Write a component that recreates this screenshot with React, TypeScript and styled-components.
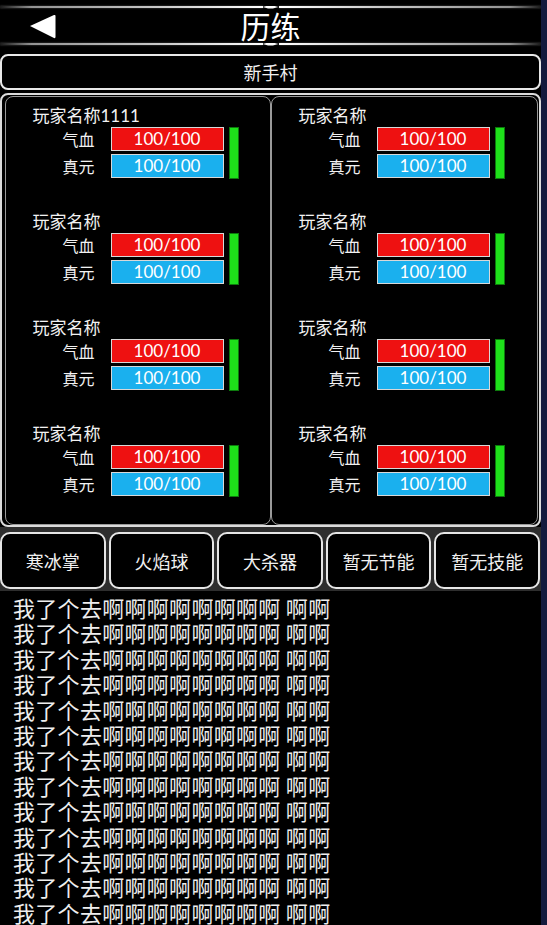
import styled, { createGlobalStyle } from "styled-components";

const GlobalStyle = createGlobalStyle`
  html, body {
    margin: 0;
    padding: 0;
    background: #141a3d;
  }
  body {
    font-family: Lato, "Noto Sans CJK SC", sans-serif;
    color: #f2f2f2;
  }
  * {
    box-sizing: border-box;
  }
`;

interface Player {
  name: string;
  hp: string;
  mp: string;
}

const players: Player[] = Array.from({ length: 8 }, (_, i) => ({
  name: i === 0 ? "玩家名称1111" : "玩家名称",
  hp: "100/100",
  mp: "100/100",
}));

const skills = ["寒冰掌", "火焰球", "大杀器", "暂无节能", "暂无技能"];

const logLines = Array.from({ length: 13 }, () => "我了个去啊啊啊啊啊啊啊啊 啊啊");

const BackArrow = () => (
  <svg width="26" height="25" viewBox="0 0 26 25">
    <path d="M0 12 L24 1 Q25.5 0.5 25.5 2 L25.5 23 Q25.5 24.5 24 24 Z" fill="#fff" />
  </svg>
);

const PlayerCard: React.FC<{ player: Player }> = ({ player }) => (
  <Card>
    <Name>{player.name}</Name>
    <Stats>
      <StatRows>
        <StatRow>
          <StatLabel>气血</StatLabel>
          <Bar $color="#ee1111">{player.hp}</Bar>
        </StatRow>
        <StatRow>
          <StatLabel>真元</StatLabel>
          <Bar $color="#1ab0ee">{player.mp}</Bar>
        </StatRow>
      </StatRows>
      <Energy />
    </Stats>
  </Card>
);

const App = () => {
  const left = players.filter((_, i) => i % 2 === 0);
  const right = players.filter((_, i) => i % 2 === 1);

  return (
    <>
      <GlobalStyle />
      <Screen>
        <Header>
          <Rule>
            <RuleLine $side="left" />
            <Gem />
            <RuleLine $side="right" />
          </Rule>
          <TitleRow>
            <BackButton>
              <BackArrow />
            </BackButton>
            <Title>历练</Title>
            <span />
          </TitleRow>
          <Rule>
            <RuleLine $side="left" />
            <Gem />
            <RuleLine $side="right" />
          </Rule>
        </Header>

        <ZoneBar>新手村</ZoneBar>

        <Panel>
          <Column>
            {left.map((p, i) => (
              <PlayerCard key={i} player={p} />
            ))}
          </Column>
          <Column>
            {right.map((p, i) => (
              <PlayerCard key={i} player={p} />
            ))}
          </Column>
        </Panel>

        <SkillBar>
          {skills.map((s) => (
            <SkillButton key={s}>{s}</SkillButton>
          ))}
        </SkillBar>

        <Log>
          {logLines.map((line, i) => (
            <LogLine key={i}>{line}</LogLine>
          ))}
        </Log>
      </Screen>
    </>
  );
};

const Screen = styled.div`
  width: 541px;
  height: 100vh;
  background: #000;
  display: flex;
  flex-direction: column;
  overflow: hidden;
`;

const Header = styled.header`
  padding-top: 4px;
  display: flex;
  flex-direction: column;
`;

const Rule = styled.div`
  height: 6px;
  display: flex;
  align-items: center;
`;

const RuleLine = styled.div<{ $side: "left" | "right" }>`
  flex: 1;
  height: 1.5px;
  background: linear-gradient(
    ${(p) => (p.$side === "left" ? "to right" : "to left")},
    rgba(255, 255, 255, 0.1) 0%,
    rgba(210, 210, 210, 0.7) 12%,
    rgba(235, 235, 235, 0.85) 60%,
    rgba(255, 255, 255, 1) 100%
  );
  box-shadow: 0 0 2px rgba(255, 255, 255, 0.35);
`;

const Gem = styled.div`
  width: 16px;
  height: 3px;
  background: #fff;
  clip-path: polygon(0 50%, 35% 0, 65% 0, 100% 50%, 65% 100%, 35% 100%);
`;

const TitleRow = styled.div`
  height: 31px;
  display: grid;
  grid-template-columns: 1fr auto 1fr;
  align-items: center;
`;

const BackButton = styled.div`
  padding-left: 30px;
  display: flex;
  align-items: center;
  padding-top: 1px;
`;

const Title = styled.h1`
  margin: 0;
  font-family: "Noto Sans CJK SC", sans-serif;
  font-weight: 400;
  font-size: 30px;
  line-height: 31px;
  color: #fff;
`;

const ZoneBar = styled.div`
  margin-top: 7px;
  height: 36px;
  border: 2px solid #e8e8e8;
  border-radius: 8px;
  width: 541px;
  display: flex;
  align-items: center;
  justify-content: center;
  font-family: "Noto Sans CJK SC", sans-serif;
  font-size: 18px;
  color: #f0f0f0;
`;

const Panel = styled.div`
  margin-top: 3px;
  height: 434px;
  width: 541px;
  border: 2px solid #dcdcdc;
  border-radius: 8px;
  padding: 1px 0 0 3px;
  display: grid;
  grid-template-columns: 266px 267px;
`;

const Column = styled.div`
  border: 1.5px solid #9a9a9a;
  border-radius: 8px;
  padding: 9px 0 0 26.5px;
  display: flex;
  flex-direction: column;
  gap: 33px;
`;

const Card = styled.div`
  display: flex;
  flex-direction: column;
`;

const Name = styled.div`
  font-size: 17px;
  line-height: 20px;
  color: #f2f2f2;
`;

const Stats = styled.div`
  margin-top: 1px;
  display: flex;
  gap: 5px;
`;

const StatRows = styled.div`
  display: flex;
  flex-direction: column;
  gap: 3px;
`;

const StatRow = styled.div`
  display: flex;
  align-items: center;
  gap: 16px;
`;

const StatLabel = styled.span`
  width: 62px;
  text-align: right;
  font-family: "Noto Sans CJK SC", sans-serif;
  font-size: 16px;
  line-height: 24px;
  color: #f2f2f2;
`;

const Bar = styled.div<{ $color: string }>`
  width: 113px;
  height: 24px;
  border: 1px solid #d8d8d8;
  background: ${(p) => p.$color};
  color: #fff;
  font-family: Lato, sans-serif;
  font-size: 17px;
  line-height: 22px;
  text-align: center;
`;

const Energy = styled.div`
  width: 10px;
  height: 52px;
  background: #1ee01a;
  border: 1px solid #0d7a0d;
`;

const SkillBar = styled.div`
  height: 64px;
  width: 541px;
  padding: 5px 1px 2px 0;
  background: #2e2e2e;
  display: grid;
  grid-template-columns: repeat(5, 1fr);
  gap: 3px;
`;

const SkillButton = styled.button`
  background: #000;
  border: 2px solid #e6e6e6;
  border-radius: 10px;
  color: #f0f0f0;
  font-family: "Noto Sans CJK SC", sans-serif;
  font-size: 18px;
  padding: 0;
  cursor: pointer;
`;

const Log = styled.div`
  flex: 1;
  overflow: hidden;
  padding: 4px 0 0 13px;
`;

const LogLine = styled.div`
  font-family: "Noto Sans CJK SC", sans-serif;
  font-size: 22px;
  line-height: 25.4px;
  height: 25.4px;
  color: #eeeeee;
  white-space: nowrap;
  letter-spacing: 0.3px;
`;

export default App;
